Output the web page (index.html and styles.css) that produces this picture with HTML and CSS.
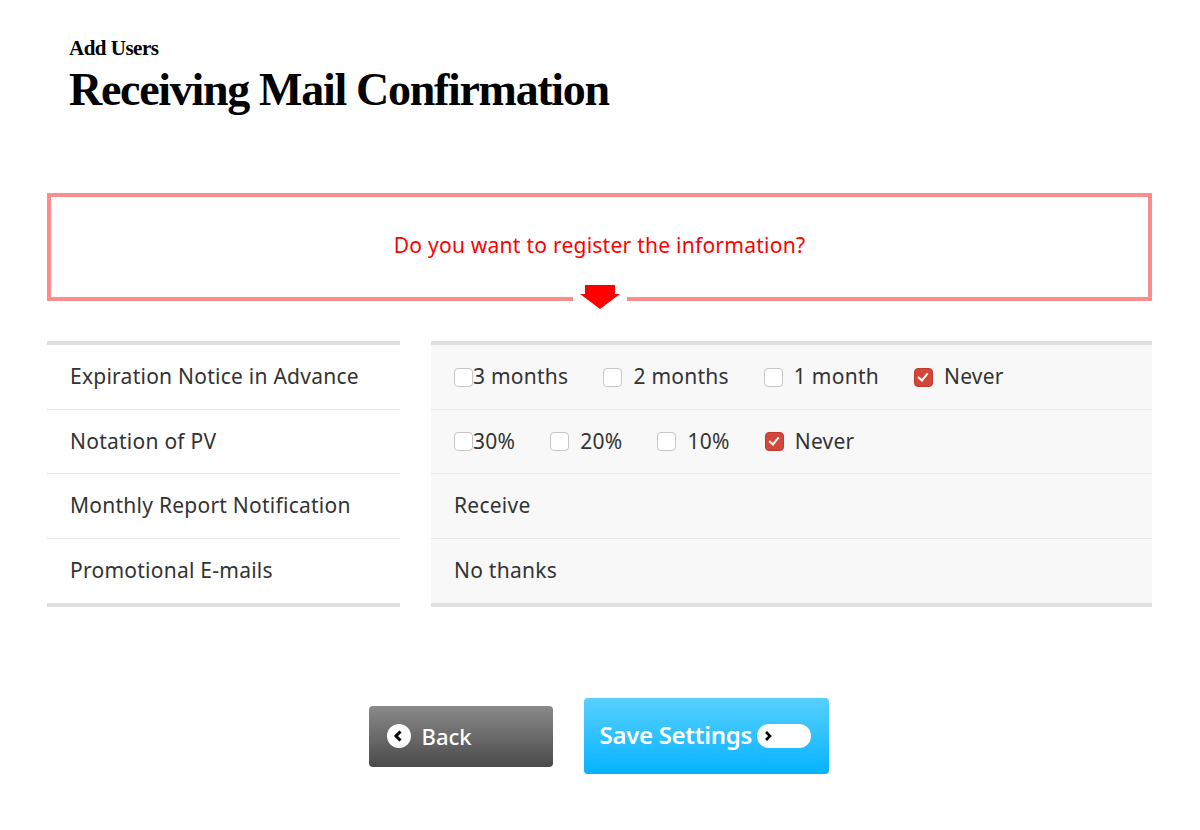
FILE: index.html
```html
<!DOCTYPE html>
<html lang="en">
<head>
  <meta charset="UTF-8" />
  <title>Receiving Mail Confirmation</title>
  <link rel="stylesheet" href="styles.css">
</head>
<body>

  <div class="page">
    <header class="page-head">
      <div class="sub-title">Add Users</div>
      <h1 class="main-title">Receiving Mail Confirmation</h1>
    </header>

    <div class="notice-frame">
      <div class="notice-inner">
        Do you want to register the information?
      </div>
      <div class="notice-arrow">
        <svg width="54" height="26" viewBox="0 0 54 26">
          <polygon points="12,0 42,0 42,9 47,9 27,24 7,9 12,9" fill="#ff0000" />
        </svg>
      </div>
    </div>

    <div class="form-table">
      <div class="stripe"></div>
      <div class="stripe"></div>

      <div class="cell label">Expiration Notice in Advance</div>
      <div class="cell value">
        <span class="opt tight"><span class="box"></span>3 months</span>
        <span class="opt"><span class="box"></span>2 months</span>
        <span class="opt"><span class="box"></span>1 month</span>
        <span class="opt"><span class="box checked"></span>Never</span>
      </div>

      <div class="cell label">Notation of PV</div>
      <div class="cell value">
        <span class="opt tight"><span class="box"></span>30%</span>
        <span class="opt"><span class="box"></span>20%</span>
        <span class="opt"><span class="box"></span>10%</span>
        <span class="opt"><span class="box checked"></span>Never</span>
      </div>

      <div class="cell label">Monthly Report Notification</div>
      <div class="cell value">Receive</div>

      <div class="cell label last">Promotional E-mails</div>
      <div class="cell value last">No thanks</div>

      <div class="stripe"></div>
      <div class="stripe"></div>
    </div>

    <div class="actions">
      <button class="btn-back">
        <span class="back-icon">
          <svg width="24" height="24" viewBox="0 0 24 24">
            <circle cx="12" cy="12" r="12" fill="#fff" />
            <polyline points="13.5,7.5 9,12 13.5,16.5" fill="none" stroke="#000" stroke-width="3" />
          </svg>
        </span>
        Back
      </button>
      <button class="btn-save">
        Save Settings
        <span class="save-pill">
          <svg width="12" height="12" viewBox="0 0 12 12">
            <polyline points="4,2 8,6 4,10" fill="none" stroke="#000" stroke-width="2.6" />
          </svg>
        </span>
      </button>
    </div>
  </div>

</body>
</html>
```

FILE: styles.css
```css
body {
  margin: 0;
  background: #fff;
  font-family: "Noto Sans", "Noto Sans CJK JP", sans-serif;
  color: #333;
}

.page {
  width: 1105px;
  margin-left: 47px;
}

.page-head {
  padding: 36px 0 0 22px;
  font-family: "Liberation Serif", "DejaVu Serif", serif;
  color: #000;
}

.sub-title {
  font-size: 21px;
  font-weight: bold;
  letter-spacing: -0.5px;
  line-height: 24px;
}

.main-title {
  margin: 4px 0 0 0;
  font-size: 46px;
  font-weight: bold;
  letter-spacing: -1.3px;
  line-height: 52px;
}

/* red frame */
.notice-frame {
  position: relative;
  margin-top: 77px;
  border: 4px solid #ff8c8c;
}

.notice-inner {
  background: #fff;
  height: 100px;
  display: flex;
  align-items: center;
  justify-content: center;
  color: #ff0000;
  font-size: 21px;
  letter-spacing: 0.25px;
  padding-bottom: 4px;
  box-sizing: border-box;
}

.notice-arrow {
  position: absolute;
  left: 522px;
  bottom: -14px;
  width: 54px;
  height: 26px;
  padding-top: 3px;
  background: #fff;
  display: flex;
  justify-content: center;
}

/* settings table */
.form-table {
  margin-top: 40px;
  display: grid;
  grid-template-columns: 353px 1fr;
  column-gap: 31px;
}

.stripe {
  height: 4px;
  background: #e0e0e0;
}

.cell {
  height: 64.5px;
  display: flex;
  align-items: center;
  font-size: 21px;
  letter-spacing: 0.25px;
  border-bottom: 1px solid #e6e6e6;
  box-sizing: border-box;
  padding-bottom: 1px;
}

.cell.last {
  border-bottom: none;
}

.label {
  padding-left: 23px;
  background: #fff;
}

.value {
  padding-left: 23px;
  background: #f8f8f8;
  gap: 35px;
}

.opt {
  display: flex;
  align-items: center;
  gap: 11px;
}

.opt.tight {
  gap: 0;
}

.box {
  width: 17px;
  height: 17px;
  border: 1px solid #c6c6c6;
  border-radius: 4px;
  background: #fff;
  position: relative;
  top: 1px;
}

.box.checked {
  background: #d2473a;
  border-color: #c23a2e;
}

.box.checked::after {
  content: "";
  position: absolute;
  left: 5px;
  top: 2px;
  width: 4px;
  height: 8px;
  border: solid #fff;
  border-width: 0 2px 2px 0;
  transform: rotate(40deg);
}

/* buttons */
.actions {
  margin-top: 91px;
  display: flex;
  justify-content: center;
  align-items: center;
  gap: 31px;
  padding-right: 2px;
}

.btn-back {
  width: 184px;
  height: 61px;
  border: none;
  border-radius: 4px;
  background: linear-gradient(#8a8a8a, #4a4a4a);
  color: #fff;
  font-family: "Noto Sans", sans-serif;
  font-size: 22px;
  font-weight: 500;
  display: flex;
  align-items: center;
  gap: 11px;
  padding: 0 0 0 18px;
}

.back-icon {
  display: flex;
}

.btn-save {
  width: 245px;
  height: 76px;
  border: none;
  border-radius: 4px;
  background: linear-gradient(#58d0ff, #05b2ff);
  color: #fff;
  font-family: "Noto Sans", sans-serif;
  font-size: 24px;
  font-weight: 600;
  letter-spacing: -0.3px;
  display: flex;
  align-items: center;
  gap: 5px;
  padding: 0 0 4px 16px;
}

.save-pill {
  width: 54px;
  height: 24px;
  border-radius: 12px;
  background: #fff;
  display: flex;
  align-items: center;
  padding-left: 5px;
  box-sizing: border-box;
  margin-top: 4px;
}
```
